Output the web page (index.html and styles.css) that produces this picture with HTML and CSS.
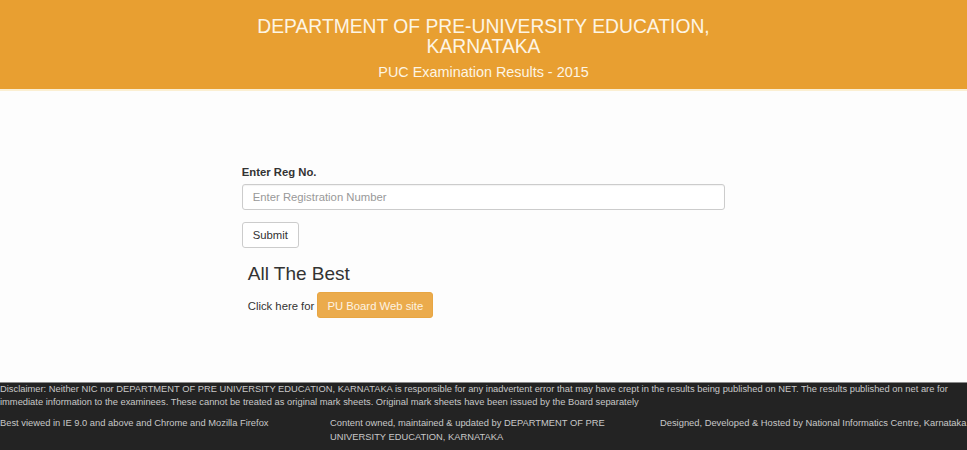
FILE: index.html
```html
<!DOCTYPE html>
<html lang="en">
<head>
  <meta charset="UTF-8">
  <meta name="viewport" content="width=device-width, initial-scale=1.0">
  <title>PUC Examination Results - 2015</title>
  <link rel="stylesheet" href="styles.css">
</head>
<body>
  <div class="header">
    <div class="col">
      <h3 class="title">DEPARTMENT OF PRE-UNIVERSITY EDUCATION, KARNATAKA</h3>
      <p class="subtitle">PUC Examination Results - 2015</p>
    </div>
  </div>

  <div class="main">
    <div class="col">
      <form class="reg-form" onsubmit="return false;">
        <label for="regno">Enter Reg No.</label>
        <input type="text" id="regno" placeholder="Enter Registration Number">
        <button type="submit" class="btn">Submit</button>
      </form>
      <div class="best">
        <h3>All The Best</h3>
        <p>Click here for <a href="#" class="btn btn-warning">PU Board Web site</a></p>
      </div>
    </div>
  </div>

  <div class="footer">
    <p class="disclaimer">Disclaimer: Neither NIC nor DEPARTMENT OF PRE UNIVERSITY EDUCATION, KARNATAKA is responsible for any inadvertent error that may have crept in the results being published on NET. The results published on net are for immediate information to the examinees. These cannot be treated as original mark sheets. Original mark sheets have been issued by the Board separately</p>
    <div class="footer-cols">
      <div class="footer-col">Best viewed in IE 9.0 and above and Chrome and Mozilla Firefox</div>
      <div class="footer-col">Content owned, maintained &amp; updated by DEPARTMENT OF PRE UNIVERSITY EDUCATION, KARNATAKA</div>
      <div class="footer-col">Designed, Developed &amp; Hosted by National Informatics Centre, Karnataka</div>
    </div>
  </div>
</body>
</html>
```

FILE: styles.css
```css
/* Page layout */
html, body {
  height: 100%;
}

body {
  font-family: "Liberation Sans", Arial, sans-serif;
  font-size: 11.3px;
  color: #333;
  background-color: #fdfdfd;
  margin: 0;
  display: flex;
  flex-direction: column;
}

.col {
  width: 50%;
  margin-left: 25%;
}

/* Orange header */
.header {
  background-color: #e89f31;
  border-bottom: 2px solid #fbefd2;
  color: #fdf5e4;
  text-align: center;
  padding: 17px 0 8px;
}

.title {
  font-size: 19.3px;
  font-weight: normal;
  line-height: 20px;
  margin: 0;
}

.subtitle {
  font-size: 14.4px;
  line-height: 17px;
  margin: 7px 0 0;
}

/* Registration form */
.main {
  flex: 1;
}

.reg-form {
  padding-top: 75px;
}

label {
  display: block;
  font-weight: bold;
  margin-bottom: 6px;
}

input {
  display: block;
  box-sizing: border-box;
  width: 100%;
  height: 26px;
  padding: 4px 10px;
  font-family: inherit;
  font-size: 11.3px;
  color: #555;
  border: 1px solid #ccc;
  border-radius: 3px;
  background-color: #fff;
  box-shadow: inset 0 1px 1px rgba(0,0,0,0.05);
}

input::placeholder {
  color: #999;
}

.btn {
  display: inline-block;
  box-sizing: border-box;
  height: 26px;
  padding: 5px 10px;
  font-family: inherit;
  font-size: 11.3px;
  line-height: 14px;
  color: #333;
  background-color: #fff;
  border: 1px solid #ccc;
  border-radius: 3px;
  text-decoration: none;
  cursor: pointer;
  margin-top: 12px;
}

.btn-warning {
  margin: 0;
  color: #fdf3e3;
  background-color: #ebab4c;
  border-color: #e8a643;
  padding: 6px 9px;
}

.best {
  padding-left: 6px;
}

.best h3 {
  font-size: 19px;
  font-weight: normal;
  margin: 15px 0 7px;
}

.best p {
  margin: 0;
}

/* Dark footer */
.footer {
  background-color: #232323;
  border-top: 1px solid #8a8a8a;
  color: #c8c8c8;
  font-size: 9.35px;
  height: 67px;
}

.disclaimer {
  line-height: 13px;
  margin: 0;
}

.footer-cols {
  display: grid;
  grid-template-columns: 330px 330px 1fr;
  line-height: 14px;
  margin-top: 7px;
}

.footer-col {
  padding-right: 20px;
}

.footer-col:last-child {
  padding-right: 0;
  white-space: nowrap;
}
```
